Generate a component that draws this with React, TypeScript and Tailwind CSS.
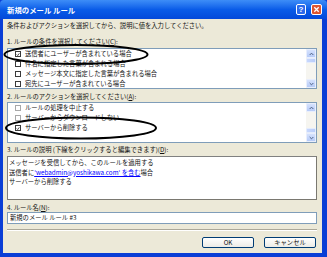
import React from "react";

function Box({ checked = false, gray = false }: { checked?: boolean; gray?: boolean }) {
  return (
    <span
      className={
        gray
          ? "w-[6px] h-[6px] border border-[#A8A8A8] bg-white flex items-center justify-center shrink-0"
          : "w-[6px] h-[6px] border border-[#3A3A3A] bg-white flex items-center justify-center shrink-0"
      }
    >
      {checked && (
        <svg viewBox="0 0 6 6" className="w-[5px] h-[5px]">
          <path d="M1 3 L2.5 4.5 L5 1.2" stroke="#111" strokeWidth="1.1" fill="none" />
        </svg>
      )}
    </span>
  );
}

function Row({ text, checked = false, gray = false }: { text: string; checked?: boolean; gray?: boolean }) {
  return (
    <div className="h-[10px] flex items-center pl-[7px] gap-[4px] whitespace-nowrap">
      <Box checked={checked} gray={gray} />
      <span>{text}</span>
    </div>
  );
}

function Arrow({ up }: { up: boolean }) {
  return (
    <svg viewBox="0 0 6 4" className="w-[5px] h-[4px]">
      <path d={up ? "M0.8 3.2 L3 1 L5.2 3.2" : "M0.8 0.8 L3 3 L5.2 0.8"} stroke="#4D6185" strokeWidth="1.2" fill="none" />
    </svg>
  );
}

function Btn({ up }: { up: boolean }) {
  return (
    <div className="h-[9px] bg-gradient-to-b from-[#D6E2FD] to-[#B6CBF8] border border-[#E8EEFD] rounded-[1px] flex items-center justify-center">
      <Arrow up={up} />
    </div>
  );
}

function Thumb() {
  return <div className="h-[5px] bg-gradient-to-r from-[#C8D8FD] to-[#B9CDF9] border border-[#E4ECFD] rounded-[1px]" />;
}

function ScrollBar({ atTop }: { atTop: boolean }) {
  return (
    <div className="w-[10px] flex flex-col bg-[#F6F5F0]">
      <Btn up />
      {atTop ? (
        <>
          <Thumb />
          <div className="flex-1" />
        </>
      ) : (
        <>
          <div className="flex-1" />
          <Thumb />
        </>
      )}
      <Btn up={false} />
    </div>
  );
}

function Label({ text, acc }: { text: string; acc: string }) {
  return (
    <div className="h-[8px] leading-[8px] whitespace-nowrap">
      {text}(<span className="underline">{acc}</span>):
    </div>
  );
}

export default function App() {
  return (
    <div className="w-[327px] h-[257px] overflow-hidden relative bg-[#0A3ED6] font-['Noto_Sans_CJK_JP',sans-serif] text-[6.3px] leading-[8px] text-[#111]">
      {/* title bar */}
      <div className="h-[19px] flex items-center justify-between pl-[7px] pr-[5px] bg-gradient-to-b from-[#3D8DF7] via-[#0A5CE8] to-[#0449DA] rounded-t-[4px]">
        <span className="text-white font-bold text-[7.4px] leading-[9px] whitespace-nowrap">新規のメール ルール</span>
        <div className="flex gap-[5px] items-center">
          <div className="w-[10px] h-[11px] rounded-[2px] border border-white bg-[#2C6AEB] text-white text-[8px] leading-[9px] font-bold flex items-center justify-center font-['Liberation_Sans',sans-serif]">
            ?
          </div>
          <div className="w-[11px] h-[11px] rounded-[2px] border border-white bg-[#DE5530] flex items-center justify-center">
            <svg viewBox="0 0 8 8" className="w-[7px] h-[7px]">
              <path d="M1.5 1.5 L6.5 6.5 M6.5 1.5 L1.5 6.5" stroke="white" strokeWidth="1.5" />
            </svg>
          </div>
        </div>
      </div>

      {/* body */}
      <div className="h-[234px] ml-[3px] mr-[5px] bg-[#ECE9D8] pl-[4px] pr-[5px] flex flex-col">
        <div className="mt-[3px] h-[8px] leading-[8px] whitespace-nowrap">
          条件およびアクションを選択してから、説明に値を入力してください。
        </div>

        <div className="mt-[8px]">
          <Label text="1. ルールの条件を選択してください" acc="C" />
        </div>
        <div className="mt-[2px] h-[41px] border border-[#7F9DB9] bg-white flex overflow-hidden">
          <div className="flex-1 overflow-hidden">
            <Row text="送信者にユーザーが含まれている場合" checked />
            <Row text="件名に指定した言葉が含まれる場合" />
            <Row text="メッセージ本文に指定した言葉が含まれる場合" />
            <Row text="宛先にユーザーが含まれている場合" />
          </div>
          <ScrollBar atTop />
        </div>

        <div className="mt-[4px]">
          <Label text="2. ルールのアクションを選択してください" acc="A" />
        </div>
        <div className="mt-[1px] h-[41px] border border-[#7F9DB9] bg-white flex overflow-hidden">
          <div className="flex-1 overflow-hidden">
            <Row text="ルールの処理を中止する" gray />
            <Row text="サーバーからダウンロードしない" gray />
            <Row text="サーバーから削除する" checked />
          </div>
          <ScrollBar atTop={false} />
        </div>

        <div className="mt-[3px]">
          <Label text="3. ルールの説明 (下線をクリックすると編集できます)" acc="D" />
        </div>
        <div className="mt-[2px] h-[44px] border border-t-[#808080] border-l-[#808080] border-r-[#7A7870] border-b-[#7A7870] bg-white pl-[1px] pt-[1px] leading-[9.5px] whitespace-nowrap">
          <div>メッセージを受信してから、このルールを適用する</div>
          <div>
            送信者に<span className="text-[#0000FF] underline">'webadmin@yoshikawa.com' を含む</span>場合
          </div>
          <div>サーバーから削除する</div>
        </div>

        <div className="mt-[4px]">
          <Label text="4. ルール名" acc="N" />
        </div>
        <div className="mt-[0px] h-[12px] border border-[#7F9DB9] bg-white pl-[2px] flex items-center whitespace-nowrap">
          新規のメール ルール #3
        </div>

        <div className="mt-[5px] h-[2px] border-t border-t-[#ACA899] border-b border-b-white" />

        <div className="mt-[6px] flex justify-end gap-[10px] pr-[1px]">
          <div className="w-[52px] h-[11px] border border-[#003C74] rounded-[2px] bg-gradient-to-b from-white to-[#ECEBE6] flex items-center justify-center leading-[8px]">
            OK
          </div>
          <div className="w-[52px] h-[11px] border border-[#003C74] rounded-[2px] bg-gradient-to-b from-white to-[#ECEBE6] flex items-center justify-center leading-[8px]">
            キャンセル
          </div>
        </div>
      </div>

      {/* hand-drawn ellipses */}
      <svg className="absolute left-0 top-0 pointer-events-none" width="327" height="257">
        <ellipse cx="76" cy="54.5" rx="71.5" ry="9.5" fill="none" stroke="black" strokeWidth="2" />
        <ellipse cx="81" cy="128" rx="75" ry="10.5" fill="none" stroke="black" strokeWidth="2" />
      </svg>
    </div>
  );
}
